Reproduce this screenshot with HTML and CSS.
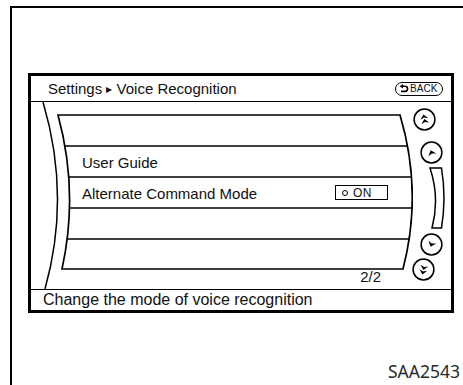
FILE: index.html
```html
<!DOCTYPE html>
<html>
	<head>
		<title>Settings - Voice Recognition</title>
		<meta charset="utf-8">
		<link rel="icon" href="data:,">
		<meta name="viewport" content="width=device-width, initial-scale=1">
		<link rel="stylesheet" href="styles.css">
	</head>
	<body>
		<div class="frame">
			<div class="screen">
				<div class="header">
					<span class="crumb">Settings <span class="sep">▸</span> Voice Recognition</span>
					<span class="back">
						<svg width="10" height="9" viewBox="0 0 10 9">
							<path d="M3.5 2.2 H6 A2.6 2.6 0 0 1 6 7.4 H2" fill="none" stroke="#000" stroke-width="1.6"/>
							<path d="M0.6 2.2 L4 0 L4 4.4 Z" fill="#000"/>
						</svg>BACK</span>
				</div>
				<div class="middle">
					<div class="list-area">
						<svg class="panel" width="382" height="187" viewBox="0 0 382 187">
							<defs>
								<clipPath id="panel_clip">
									<path d="M27 13 L369 13 Q392 90 372 167 L31 167 Q48 90 27 13 Z"/>
								</clipPath>
							</defs>
							<path d="M12 0 Q40 94 14 187" fill="none" stroke="#000" stroke-width="1.5"/>
							<g clip-path="url(#panel_clip)" stroke="#000" stroke-width="1.5">
								<line x1="0" y1="44" x2="382" y2="44"/>
								<line x1="0" y1="75" x2="382" y2="75"/>
								<line x1="0" y1="106" x2="382" y2="106"/>
								<line x1="0" y1="137" x2="382" y2="137"/>
							</g>
							<path d="M27 13 L369 13 Q392 90 372 167 L31 167 Q48 90 27 13 Z" fill="none" stroke="#000" stroke-width="1.7"/>
						</svg>
						<div class="rows">
							<div class="row"></div>
							<div class="row">User Guide</div>
							<div class="row">
								<span>Alternate Command Mode</span>
								<span class="toggle"><span class="ring"></span>ON</span>
							</div>
							<div class="row"></div>
							<div class="row"></div>
						</div>
						<div class="page-count">2/2</div>
					</div>
					<div class="scroller">
						<svg class="btn dbl-up" width="23" height="23" viewBox="-11.5 -11.5 23 23">
							<circle r="10.4" fill="none" stroke="#000" stroke-width="1.5"/>
							<g transform="rotate(-12)" fill="#000">
								<path d="M-4 -0.5 L0 -5 L4 -0.5 L0 -2 Z"/>
								<path d="M-4 4 L0 -0.5 L4 4 L0 2.5 Z"/>
							</g>
						</svg>
						<svg class="btn up" width="23" height="23" viewBox="-11.5 -11.5 23 23">
							<circle r="10.4" fill="none" stroke="#000" stroke-width="1.5"/>
							<path transform="rotate(-20)" d="M-4.2 2.5 L0 -2.5 L4.2 2.5 L0 1 Z" fill="#000"/>
						</svg>
						<svg class="bar" width="18" height="62" viewBox="0 0 18 62">
							<path d="M1 1 L12.5 1 Q17.5 31 12.5 61 L3 61 Q11 31 1 1 Z" fill="none" stroke="#000" stroke-width="1.5"/>
						</svg>
						<svg class="btn down" width="23" height="23" viewBox="-11.5 -11.5 23 23">
							<circle r="10.4" fill="none" stroke="#000" stroke-width="1.5"/>
							<path transform="rotate(20)" d="M-4.2 -2.5 L0 2.5 L4.2 -2.5 L0 -1 Z" fill="#000"/>
						</svg>
						<svg class="btn dbl-down" width="23" height="23" viewBox="-11.5 -11.5 23 23">
							<circle r="10.4" fill="none" stroke="#000" stroke-width="1.5"/>
							<g transform="rotate(12)" fill="#000">
								<path d="M-4 0.5 L0 5 L4 0.5 L0 2 Z"/>
								<path d="M-4 -4 L0 0.5 L4 -4 L0 -2.5 Z"/>
							</g>
						</svg>
					</div>
				</div>
				<div class="footer">Change the mode of voice recognition</div>
			</div>
			<div class="caption">SAA2543</div>
		</div>
	</body>
</html>
```

FILE: styles.css
```css
html{
	font-family: 'Liberation Sans', Arial, sans-serif;
	color: #111;
}
body{
	margin: 0;
	background-color: #fff;
	overflow: hidden;
	height: 385px;
}
.frame{
	margin: 6px 0 0 10px;
	border-top: 2px solid #000;
	border-left: 2px solid #000;
	height: 379px;
	box-sizing: border-box;
	padding: 65px 0 0 16px;
}
.screen{
	width: 426px;
	height: 240px;
	box-sizing: border-box;
	border: 3px solid #000;
	display: flex;
	flex-direction: column;
}
.header{
	height: 26px;
	box-sizing: border-box;
	border-bottom: 1px solid #000;
	display: flex;
	align-items: center;
	justify-content: space-between;
	padding: 0 8px 0 17px;
	font-size: 15px;
}
.sep{
	font-size: 12px;
	vertical-align: 1px;
}
.back{
	display: inline-flex;
	align-items: center;
	gap: 1px;
	width: 48px;
	height: 14px;
	box-sizing: border-box;
	border: 1.5px solid #000;
	border-radius: 7px;
	padding-left: 3px;
	font-size: 10px;
	letter-spacing: 0.1px;
}
.middle{
	height: 187px;
	display: flex;
}
.list-area{
	position: relative;
	width: 382px;
}
.panel{
	position: absolute;
	left: 0;
	top: 0;
}
.rows{
	position: relative;
	padding-top: 13px;
}
.row{
	height: 31px;
	box-sizing: border-box;
	padding: 2px 25px 0 51px;
	display: flex;
	align-items: center;
	justify-content: space-between;
	font-size: 15px;
}
.toggle{
	display: inline-flex;
	align-items: center;
	width: 53px;
	height: 15px;
	box-sizing: border-box;
	border: 1.5px solid #000;
	padding-left: 6px;
	margin-top: -2px;
	font-size: 12px;
	letter-spacing: 0.4px;
}
.ring{
	width: 4px;
	height: 4px;
	border: 1.3px solid #000;
	border-radius: 50%;
	margin-right: 5px;
}
.page-count{
	position: relative;
	text-align: right;
	padding-right: 32px;
	line-height: 14px;
	font-size: 15px;
}
.scroller{
	width: 38px;
	display: flex;
	flex-direction: column;
	align-items: flex-start;
}
.scroller svg{
	display: block;
}
.dbl-up{
	margin: 6px 0 0 0;
}
.up{
	margin: 10px 0 0 7px;
}
.bar{
	margin: 3px 0 0 16px;
}
.down{
	margin: 4px 0 0 7px;
}
.dbl-down{
	margin: 2px 0 0 -1px;
}
.footer{
	flex: 1;
	border-top: 1px solid #000;
	padding-left: 12px;
	font-size: 16px;
	line-height: 19px;
}
.caption{
	font-family: 'Noto Sans', sans-serif;
	font-size: 17.5px;
	line-height: 20px;
	color: #2a2a2a;
	text-align: right;
	padding-right: 3px;
	margin-top: 48px;
}
```
